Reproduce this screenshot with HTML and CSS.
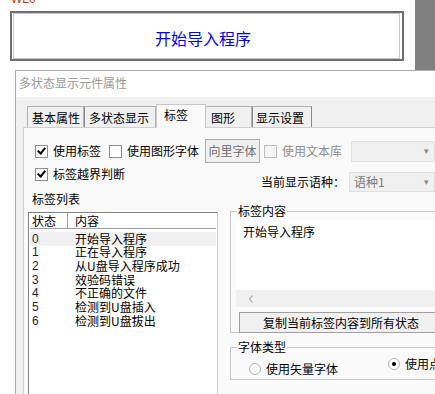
FILE: index.html
```html
<!DOCTYPE html>
<html lang="zh-CN">
<head>
  <meta charset="UTF-8">
  <title>多状态显示元件属性</title>
  <link rel="stylesheet" href="styles.css">
</head>
<body>
  <div class="canvas">
    <div class="canvas-main">
      <div class="part-name"><span>WL0</span></div>
      <div class="part-box">
        <div class="part-inner">开始导入程序</div>
      </div>
    </div>
    <div class="canvas-side"></div>
  </div>

  <div class="dialog">
    <div class="dialog-title">多状态显示元件属性</div>
    <div class="dialog-body">
      <div class="tabs">
        <div class="tab tab-basic">基本属性</div>
        <div class="tab tab-multi">多状态显示</div>
        <div class="tab tab-active">标签</div>
        <div class="tab tab-shape">图形</div>
        <div class="tab tab-display">显示设置</div>
      </div>

      <div class="pane">
        <div class="row row-one">
          <label class="check check-use"><span class="box checked"></span>使用标签</label>
          <label class="check check-graph"><span class="box"></span>使用图形字体</label>
          <div class="btn btn-font">向里字体</div>
          <label class="check disabled"><span class="box"></span>使用文本库</label>
          <div class="combo combo-lib"><span></span><i>▾</i></div>
        </div>
        <div class="row row-two">
          <label class="check check-bound"><span class="box checked"></span>标签越界判断</label>
          <div class="lang-label">当前显示语种：</div>
          <div class="combo combo-lang"><span>语种1</span><i>▾</i></div>
        </div>

        <div class="columns">
          <div class="list-col">
            <div class="list-caption">标签列表</div>
            <div class="list">
              <div class="list-head">
                <div class="col-state">状态</div>
                <div class="col-text">内容</div>
              </div>
              <div class="list-row selected"><div class="col-state">0</div><div class="col-text">开始导入程序</div></div>
              <div class="list-row"><div class="col-state">1</div><div class="col-text">正在导入程序</div></div>
              <div class="list-row"><div class="col-state">2</div><div class="col-text">从U盘导入程序成功</div></div>
              <div class="list-row"><div class="col-state">3</div><div class="col-text">效验码错误</div></div>
              <div class="list-row"><div class="col-state">4</div><div class="col-text">不正确的文件</div></div>
              <div class="list-row"><div class="col-state">5</div><div class="col-text">检测到U盘插入</div></div>
              <div class="list-row"><div class="col-state">6</div><div class="col-text">检测到U盘拔出</div></div>
            </div>
          </div>

          <div class="side-col">
            <fieldset class="group group-content">
              <legend>标签内容</legend>
              <div class="text-area">
                <div class="text-value">开始导入程序</div>
                <div class="hscroll">
                  <svg width="6" height="8" viewBox="0 0 6 8"><path d="M4.5 0.5 L1.5 4 L4.5 7.5" fill="none" stroke="#b4b4b4" stroke-width="1.2"/></svg>
                </div>
              </div>
              <div class="btn btn-copy">复制当前标签内容到所有状态</div>
            </fieldset>

            <fieldset class="group group-font">
              <legend>字体类型</legend>
              <div class="radios">
                <label class="radio radio-vector"><span class="dot"></span>使用矢量字体</label>
                <label class="radio radio-bitmap"><span class="dot on"></span>使用点阵字体</label>
              </div>
            </fieldset>
          </div>
        </div>
      </div>
    </div>
  </div>
</body>
</html>
```

FILE: styles.css
```css
body {
  margin: 0;
  width: 435px;
  height: 394px;
  overflow: hidden;
  background: #ffffff;
  font-family: "Noto Sans CJK SC", "Liberation Sans", sans-serif;
  font-size: 12px;
  line-height: 14px;
  color: #000;
}

/* editing canvas at the top */
.canvas {
  display: flex;
  height: 70px;
}

.canvas-main {
  width: 415px;
}

.canvas-side {
  width: 20px;
  background-color: #808080;
}

.part-name {
  height: 11px;
  padding-left: 11px;
  overflow: hidden;
}

.part-name span {
  display: block;
  margin-top: -7px;
  line-height: 12px;
  color: #c83200;
  font-family: "Liberation Sans", sans-serif;
  font-size: 12px;
}

.part-box {
  margin-left: 10px;
  width: 387px;
  height: 46px;
  border: 2px solid #6e6e6e;
  padding: 0 2px 0 1px;
}

.part-inner {
  border: 1px solid #c8c8c8;
  display: flex;
  justify-content: center;
  align-items: center;
  padding: 3px 7px 0 0;
  box-sizing: border-box;
  height: 46px;
  color: #0000ff;
  font-size: 16px;
}

/* dialog */
.dialog {
  margin-left: 15px;
  border-top: 1px solid #acacac;
  border-left: 1px solid #acacac;
  height: 330px;
}

.dialog-title {
  height: 26px;
  line-height: 24px;
  padding-left: 3px;
  color: #9a9a9a;
  background: #fff;
}

.dialog-body {
  background-color: #f0f0f0;
  height: 310px;
  padding-top: 8px;
  padding-left: 7px;
}

.tabs {
  display: flex;
  padding-left: 4px;
  height: 22px;
  align-items: flex-end;
}

.tab {
  height: 21px;
  line-height: 22px;
  border: 1px solid #b0b0b0;
  border-bottom: none;
  background: #f0f0f0;
  box-sizing: border-box;
  padding-left: 4px;
  white-space: nowrap;
}

.tab-basic { width: 57px; }
.tab-multi { width: 72px; border-left-color: #8a8a8a; }
.tab-shape { width: 46px; padding-left: 5px; border-left: none; }
.tab-display { width: 60px; padding-left: 3px; border-right-color: #8a8a8a; border-left-color: #8a8a8a; }

.tab-active {
  width: 50px;
  height: 24px;
  line-height: 20px;
  padding-left: 7px;
  background: #fafafa;
  margin-bottom: -1px;
  position: relative;
  z-index: 1;
  border-color: #c8c8c8;
}

.pane {
  background: #fafafa;
  border-top: 1px solid #d0d0d0;
  border-left: 1px solid #d0d0d0;
  height: 280px;
  padding-left: 11px;
}

.row {
  display: flex;
  white-space: nowrap;
}

.row-one {
  height: 24px;
  margin-top: 11px;
  align-items: center;
}

.row-two {
  height: 31px;
  align-items: flex-start;
}

.check {
  display: flex;
  align-items: center;
}

.check-use { margin-right: 8px; }
.check-graph { margin-right: 6px; }
.check-bound { margin-top: 4px; }

.check.disabled {
  color: #8d8d8d;
  margin-left: 4px;
  margin-right: 9px;
}

.box {
  width: 11px;
  height: 11px;
  border: 1px solid #8e8e8e;
  background: #fff;
  margin-right: 5px;
  position: relative;
}

.check.disabled .box {
  border-color: #bdbdbd;
  background: #f4f4f4;
}

.box.checked::after {
  content: "";
  position: absolute;
  left: 3px;
  top: 0px;
  width: 3px;
  height: 6px;
  border-right: 2px solid #000;
  border-bottom: 2px solid #000;
  transform: rotate(40deg);
}

.btn {
  border: 1px solid #adadad;
  background: #f0f0f0;
  text-align: center;
  box-sizing: border-box;
  white-space: nowrap;
}

.btn-font {
  width: 55px;
  height: 24px;
  line-height: 22px;
  color: #6d6d6d;
}

.combo {
  display: flex;
  justify-content: space-between;
  align-items: center;
  height: 21px;
  box-sizing: border-box;
  background: #f0f0f0;
  border: 1px solid #e0e0e0;
  color: #7a7a7a;
  padding: 0 5px 0 4px;
  flex: 1;
}

.combo i {
  font-style: normal;
  font-size: 9px;
  color: #888;
}

.lang-label {
  margin-left: 136px;
  width: 88px;
  margin-top: 12px;
}

.combo-lang {
  margin-top: 9px;
  height: 20px;
}

/* list + right column */
.columns {
  display: flex;
}

.list-col {
  flex: none;
  width: 190px;
  margin-left: -7px;
}

.list-caption {
  height: 18px;
  line-height: 10px;
  margin-left: 4px;
}

.list {
  height: 190px;
  border: 1px solid #828282;
  border-right-color: #d0d0d0;
  background: #fff;
  padding: 0 1px;
}

.list-head {
  display: flex;
  height: 15px;
  line-height: 15px;
  border-bottom: 1px solid #a0a0a0;
  margin-bottom: 3px;
}

.list-head .col-state {
  border-right: 1px solid #a0a0a0;
}

.list-row {
  display: flex;
  align-items: center;
  height: 13.67px;
  line-height: 12px;
  white-space: nowrap;
}

.list-row.selected {
  background: #f0f0f0;
}

.col-state {
  flex: none;
  width: 38px;
  padding-left: 2px;
  box-sizing: border-box;
}

.list-row .col-state {
  font-family: "Liberation Sans", sans-serif;
  color: #1e1e3c;
}

.col-text {
  padding-left: 7px;
}

.side-col {
  flex: 1;
  min-width: 0;
  margin-left: 12px;
  margin-top: 11px;
}

.group {
  border: 1px solid #c8c8c8;
  border-right: none;
  margin: 0;
  padding: 0 0 0 5px;
  box-sizing: border-box;
  min-width: 0;
}

.group legend {
  padding: 0 1px;
  margin-left: 1px;
  line-height: 12px;
}

.group-content {
  height: 128px;
}

.text-area {
  margin-top: 3px;
  height: 87px;
  background: #fff;
  display: flex;
  flex-direction: column;
  justify-content: space-between;
}

.text-value {
  padding: 5px 0 0 7px;
}

.hscroll {
  height: 17px;
  background: #f0f0f0;
  display: flex;
  align-items: center;
  padding-left: 12px;
}

.btn-copy {
  margin: 5px 0 0 3px;
  width: 204px;
  height: 21px;
  line-height: 19px;
  border-color: #a0a0a0;
  color: #000;
}

.group-font {
  margin-top: 8px;
  height: 39px;
}

.radios {
  display: flex;
  align-items: flex-start;
  white-space: nowrap;
}

.radio {
  display: flex;
  align-items: center;
  flex: none;
}

.radio-vector {
  margin: 9px 0 0 13px;
}

.radio-bitmap {
  margin: 4px 0 0 50px;
}

.dot {
  width: 10px;
  height: 10px;
  border-radius: 50%;
  border: 1px solid #b4b4b4;
  background: #fdfdfd;
  margin-right: 5px;
  position: relative;
}

.dot.on::after {
  content: "";
  position: absolute;
  left: 3px;
  top: 3px;
  width: 4px;
  height: 4px;
  border-radius: 50%;
  background: #000;
}
```
